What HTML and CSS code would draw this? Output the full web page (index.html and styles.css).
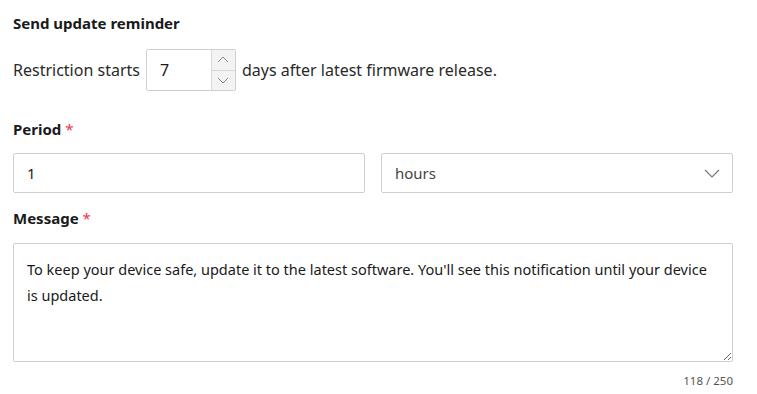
FILE: index.html
```html
<!DOCTYPE html>
<html>
<head>
<meta charset="utf-8">
<link rel="stylesheet" href="styles.css">
</head>
<body>
<div class="form">
  <h3 class="title">Send update reminder</h3>
  <div class="restrict">
    <span>Restriction starts</span>
    <div class="numbox">
      <span class="numval">7</span>
      <div class="spin">
        <div class="spin-btn">
          <svg width="12" height="7" viewBox="0 0 12 7"><path d="M1 6 L6 1 L11 6" fill="none" stroke="#8a8a8a" stroke-width="1"/></svg>
        </div>
        <div class="spin-btn">
          <svg width="12" height="7" viewBox="0 0 12 7"><path d="M1 1 L6 6 L11 1" fill="none" stroke="#8a8a8a" stroke-width="1"/></svg>
        </div>
      </div>
    </div>
    <span>days after latest firmware release.</span>
  </div>

  <div class="label">Period <span class="req">*</span></div>
  <div class="period-row">
    <div class="field">1</div>
    <div class="field select">
      <span class="sel-text">hours</span>
      <svg width="16" height="9" viewBox="0 0 16 9"><path d="M1 1 L8 8 L15 1" fill="none" stroke="#777" stroke-width="1.2"/></svg>
    </div>
  </div>

  <div class="label msg-label">Message <span class="req">*</span></div>
  <textarea class="message">To keep your device safe, update it to the latest software. You'll see this notification until your device is updated.</textarea>
  <div class="counter">118 / 250</div>
</div>
</body>
</html>
```
FILE: styles.css
```css
* { box-sizing: border-box; }
html, body { margin: 0; padding: 0; background: #fff; }
body {
  font-family: "Noto Sans", sans-serif;
  font-size: 16px;
  color: #1f1f1f;
}
.form {
  width: 757px;
  padding: 13px 24px 0 13px;
}
.title {
  margin: 0;
  font-size: 15px;
  font-weight: 700;
  line-height: 20px;
  color: #1a1a1a;
}
.restrict {
  margin-top: 16px;
  display: flex;
  align-items: center;
  gap: 6px;
  color: #2a2a2a;
}
.numbox {
  width: 90px;
  height: 42px;
  border: 1px solid #cfcfcf;
  border-radius: 2px;
  display: flex;
}
.numval {
  flex: 1;
  padding-left: 13px;
  display: flex;
  align-items: center;
  color: #1a1a1a;
}
.spin {
  width: 24px;
  border-left: 1px solid #d8d8d8;
  display: flex;
  flex-direction: column;
  background: #f3f3f3;
}
.spin-btn {
  flex: 1;
  display: flex;
  align-items: center;
  justify-content: center;
}
.spin-btn + .spin-btn { border-top: 1px solid #d8d8d8; }
.label {
  margin-top: 28px;
  font-size: 15px;
  font-weight: 700;
  line-height: 20px;
  color: #1a1a1a;
}
.req { color: #e8374d; font-weight: 400; }
.period-row {
  margin-top: 14px;
  display: grid;
  grid-template-columns: 1fr 1fr;
  gap: 16px;
}
.field {
  height: 40px;
  border: 1px solid #cfcfcf;
  border-radius: 2px;
  display: flex;
  align-items: center;
  padding: 0 13px;
  font-size: 15px;
  color: #1a1a1a;
}
.select {
  justify-content: space-between;
  padding-right: 12px;
}
.sel-text { color: #444; }
.msg-label { margin-top: 15px; }
.message {
  display: block;
  margin-top: 15px;
  width: 720px;
  height: 119px;
  border: 1px solid #cfcfcf;
  border-radius: 2px;
  padding: 12px 13px;
  font-family: inherit;
  font-size: 14.5px;
  line-height: 26px;
  color: #1a1a1a;
  resize: vertical;
  outline: none;
}
.counter {
  width: 720px;
  text-align: right;
  font-size: 11.5px;
  color: #555;
  margin-top: 11px;
}
```
